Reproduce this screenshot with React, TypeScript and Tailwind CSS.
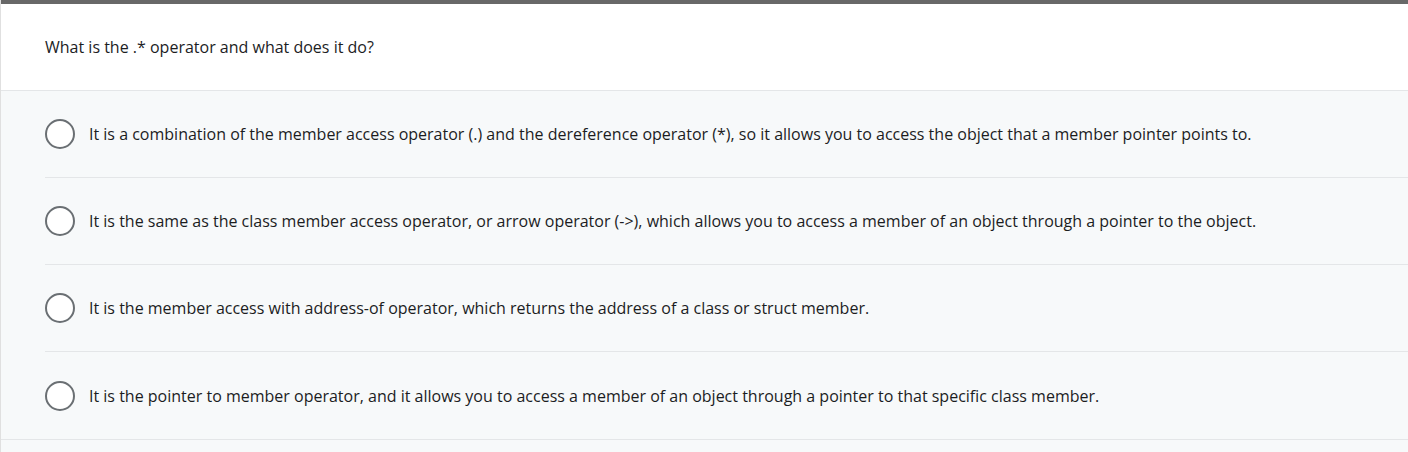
const options = [
  "It is a combination of the member access operator (.) and the dereference operator (*), so it allows you to access the object that a member pointer points to.",
  "It is the same as the class member access operator, or arrow operator (->), which allows you to access a member of an object through a pointer to the object.",
  "It is the member access with address-of operator, which returns the address of a class or struct member.",
  "It is the pointer to member operator, and it allows you to access a member of an object through a pointer to that specific class member.",
];

export default function App() {
  return (
    <div
      className="min-h-[452px] bg-[#f7f9fa] border-l border-[#e0e0e0] text-[#1c1d1f] text-[16px]"
      style={{ fontFamily: '"Open Sans", "Liberation Sans", sans-serif' }}
    >
      <div className="h-[4px] bg-[#686868]" />
      {/* Question */}
      <div className="bg-white h-[87px] pl-[44px] pt-[31px] border-b border-[#e4e6e8]">
        <p className="leading-[24px]">What is the .* operator and what does it do?</p>
      </div>

      {/* Answers */}
      <div className="border-b border-[#e4e6e8]">
        {options.map((text, i) => (
          <div key={i} className="pl-[44px]">
            <div
              className={`h-[87px] flex items-center gap-[14px] ${
                i < options.length - 1 ? "border-b border-[#e4e6e8]" : ""
              }`}
            >
              <span className="w-[30px] h-[30px] rounded-full border-2 border-[#6a6f73] bg-white shrink-0" />
              <span className="leading-[24px]">{text}</span>
            </div>
          </div>
        ))}
      </div>
    </div>
  );
}
